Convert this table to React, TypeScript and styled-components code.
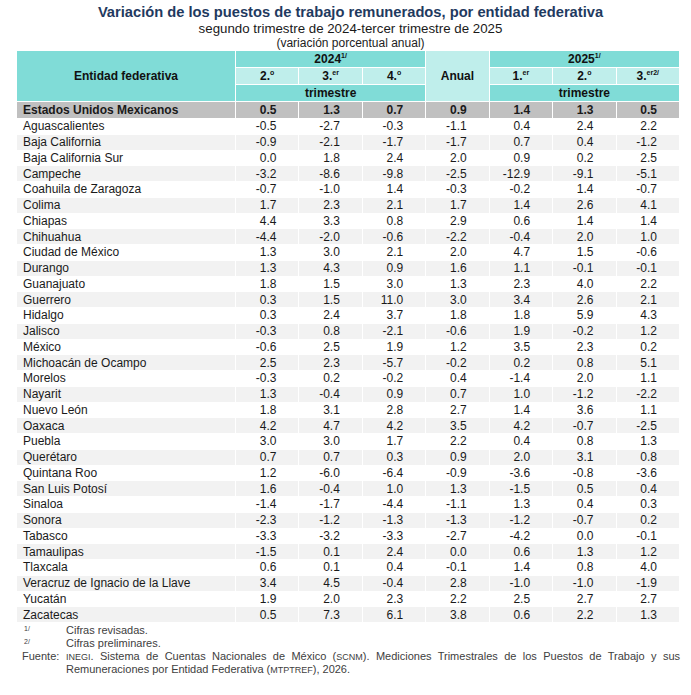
import React from "react";
import styled, {createGlobalStyle} from "styled-components";

const GlobalStyle = createGlobalStyle`
  body {
    margin: 0;
    background: #ffffff;
    font-family: "Liberation Sans", Arial, sans-serif;
  }
`;

// filas: entidad y sus siete valores (2024 2.°,3.°,4.°, anual, 2025 1.°,2.°,3.°)
const rows: [string, string[]][] = [
  ["Aguascalientes", ["-0.5", "-2.7", "-0.3", "-1.1", "0.4", "2.4", "2.2"]],
  ["Baja California", ["-0.9", "-2.1", "-1.7", "-1.7", "0.7", "0.4", "-1.2"]],
  ["Baja California Sur", ["0.0", "1.8", "2.4", "2.0", "0.9", "0.2", "2.5"]],
  ["Campeche", ["-3.2", "-8.6", "-9.8", "-2.5", "-12.9", "-9.1", "-5.1"]],
  ["Coahuila de Zaragoza", ["-0.7", "-1.0", "1.4", "-0.3", "-0.2", "1.4", "-0.7"]],
  ["Colima", ["1.7", "2.3", "2.1", "1.7", "1.4", "2.6", "4.1"]],
  ["Chiapas", ["4.4", "3.3", "0.8", "2.9", "0.6", "1.4", "1.4"]],
  ["Chihuahua", ["-4.4", "-2.0", "-0.6", "-2.2", "-0.4", "2.0", "1.0"]],
  ["Ciudad de México", ["1.3", "3.0", "2.1", "2.0", "4.7", "1.5", "-0.6"]],
  ["Durango", ["1.3", "4.3", "0.9", "1.6", "1.1", "-0.1", "-0.1"]],
  ["Guanajuato", ["1.8", "1.5", "3.0", "1.3", "2.3", "4.0", "2.2"]],
  ["Guerrero", ["0.3", "1.5", "11.0", "3.0", "3.4", "2.6", "2.1"]],
  ["Hidalgo", ["0.3", "2.4", "3.7", "1.8", "1.8", "5.9", "4.3"]],
  ["Jalisco", ["-0.3", "0.8", "-2.1", "-0.6", "1.9", "-0.2", "1.2"]],
  ["México", ["-0.6", "2.5", "1.9", "1.2", "3.5", "2.3", "0.2"]],
  ["Michoacán de Ocampo", ["2.5", "2.3", "-5.7", "-0.2", "0.2", "0.8", "5.1"]],
  ["Morelos", ["-0.3", "0.2", "-0.2", "0.4", "-1.4", "2.0", "1.1"]],
  ["Nayarit", ["1.3", "-0.4", "0.9", "0.7", "1.0", "-1.2", "-2.2"]],
  ["Nuevo León", ["1.8", "3.1", "2.8", "2.7", "1.4", "3.6", "1.1"]],
  ["Oaxaca", ["4.2", "4.7", "4.2", "3.5", "4.2", "-0.7", "-2.5"]],
  ["Puebla", ["3.0", "3.0", "1.7", "2.2", "0.4", "0.8", "1.3"]],
  ["Querétaro", ["0.7", "0.7", "0.3", "0.9", "2.0", "3.1", "0.8"]],
  ["Quintana Roo", ["1.2", "-6.0", "-6.4", "-0.9", "-3.6", "-0.8", "-3.6"]],
  ["San Luis Potosí", ["1.6", "-0.4", "1.0", "1.3", "-1.5", "0.5", "0.4"]],
  ["Sinaloa", ["-1.4", "-1.7", "-4.4", "-1.1", "1.3", "0.4", "0.3"]],
  ["Sonora", ["-2.3", "-1.2", "-1.3", "-1.3", "-1.2", "-0.7", "0.2"]],
  ["Tabasco", ["-3.3", "-3.2", "-3.3", "-2.7", "-4.2", "0.0", "-0.1"]],
  ["Tamaulipas", ["-1.5", "0.1", "2.4", "0.0", "0.6", "1.3", "1.2"]],
  ["Tlaxcala", ["0.6", "0.1", "0.4", "-0.1", "1.4", "0.8", "4.0"]],
  ["Veracruz de Ignacio de la Llave", ["3.4", "4.5", "-0.4", "2.8", "-1.0", "-1.0", "-1.9"]],
  ["Yucatán", ["1.9", "2.0", "2.3", "2.2", "2.5", "2.7", "2.7"]],
  ["Zacatecas", ["0.5", "7.3", "6.1", "3.8", "0.6", "2.2", "1.3"]],
];

const national = ["0.5", "1.3", "0.7", "0.9", "1.4", "1.3", "0.5"];

const App = () => {
  return (
    <>
      <GlobalStyle />
      <Page>
        <Heading>
          <Title>Variación de los puestos de trabajo remunerados, por entidad federativa</Title>
          <Subtitle>segundo trimestre de 2024-tercer trimestre de 2025</Subtitle>
          <Unit>(variación porcentual anual)</Unit>
        </Heading>

        <Table>
          <colgroup>
            <col style={{width: 219}} />
            {national.map((_, i) => (
              <col key={i} />
            ))}
          </colgroup>
          <thead>
            <tr>
              <Head rowSpan={3}>Entidad federativa</Head>
              <Head colSpan={3}>
                2024<Sup>1/</Sup>
              </Head>
              <Head rowSpan={3} $light>
                Anual
              </Head>
              <Head colSpan={3}>
                2025<Sup>1/</Sup>
              </Head>
            </tr>
            <tr>
              <Head $light>
                2.<Sup>o</Sup>
              </Head>
              <Head $light>
                3.<Sup>er</Sup>
              </Head>
              <Head $light>
                4.<Sup>o</Sup>
              </Head>
              <Head $light>
                1.<Sup>er</Sup>
              </Head>
              <Head $light>
                2.<Sup>o</Sup>
              </Head>
              <Head $light>
                3.<Sup>er2/</Sup>
              </Head>
            </tr>
            <tr>
              <Head colSpan={3}>trimestre</Head>
              <Head colSpan={3}>trimestre</Head>
            </tr>
          </thead>
          <tbody>
            <TotalRow>
              <Name>Estados Unidos Mexicanos</Name>
              {national.map((v, i) => (
                <Value key={i}>{v}</Value>
              ))}
            </TotalRow>
            {rows.map(([name, values], r) => (
              <Row key={name} $shaded={r % 2 === 1}>
                <Name>{name}</Name>
                {values.map((v, i) => (
                  <Value key={i}>{v}</Value>
                ))}
              </Row>
            ))}
          </tbody>
        </Table>

        <Notes>
          <Note>
            <Mark>1/</Mark>
            <span>Cifras revisadas.</span>
          </Note>
          <Note>
            <Mark>2/</Mark>
            <span>Cifras preliminares.</span>
          </Note>
          <Source>
            <SourceLabel>Fuente:</SourceLabel>
            <SourceText>
              <Caps>INEGI</Caps>. Sistema de Cuentas Nacionales de México (<Caps>SCNM</Caps>). Mediciones
              Trimestrales de los Puestos de Trabajo y sus Remuneraciones por Entidad Federativa (
              <Caps>MTPTREF</Caps>), 2026.
            </SourceText>
          </Source>
        </Notes>
      </Page>
    </>
  );
};

export default App;

const Page = styled.div`
  width: 691px;
  height: 695px;
  padding: 3px 11px 0 16px;
  box-sizing: border-box;
  color: #1a1a1a;
`;

const Heading = styled.div`
  display: flex;
  flex-direction: column;
  align-items: center;
  margin-right: -5px;
`;

const Title = styled.div`
  font-weight: bold;
  font-size: 14.7px;
  line-height: 18px;
  color: #1f3a60;
`;

const Subtitle = styled.div`
  font-size: 13.3px;
  line-height: 15px;
`;

const Unit = styled.div`
  font-size: 12px;
  line-height: 14px;
  color: #222;
`;

const Table = styled.table`
  width: 664px;
  border-collapse: collapse;
  table-layout: fixed;
  font-size: 12px;
`;

const Head = styled.th<{$light?: boolean}>`
  background: ${(p) => (p.$light ? "#bfeeeb" : "#80dcd7")};
  border: 1px solid #ffffff;
  height: 16px;
  padding: 0;
  font-size: 12px;
  font-weight: bold;
  text-align: center;
  color: #111;
`;

const Sup = styled.sup`
  font-size: 7px;
  vertical-align: 5px;
  line-height: 0;
`;

const Row = styled.tr<{$shaded?: boolean}>`
  background: ${(p) => (p.$shaded ? "#f2f2f2" : "#ffffff")};
  height: 15.75px;
`;

const TotalRow = styled.tr`
  background: #c0c0c0;
  height: 17px;
  font-weight: bold;
`;

const Name = styled.td`
  border: 1px solid #ffffff;
  padding: 0 0 0 6px;
  line-height: 14px;
  white-space: nowrap;
`;

const Value = styled.td`
  border: 1px solid #ffffff;
  padding: 0 22px 0 0;
  line-height: 14px;
  text-align: right;
`;

const Notes = styled.div`
  font-size: 11px;
  color: #404040;
  padding-top: 1px;
  line-height: 13px;
`;

const Note = styled.div`
  display: flex;
`;

const Mark = styled.span`
  width: 50px;
  padding-left: 8px;
  font-size: 7px;
  line-height: 10px;
  box-sizing: border-box;
`;

const Source = styled.div`
  display: flex;
  margin-top: 0;
`;

const SourceLabel = styled.span`
  width: 50px;
  padding-left: 6px;
  box-sizing: border-box;
`;

const SourceText = styled.p`
  flex: 1;
  margin: 0;
  text-align: justify;
`;

const Caps = styled.span`
  font-size: 9px;
  line-height: 1;
`;
